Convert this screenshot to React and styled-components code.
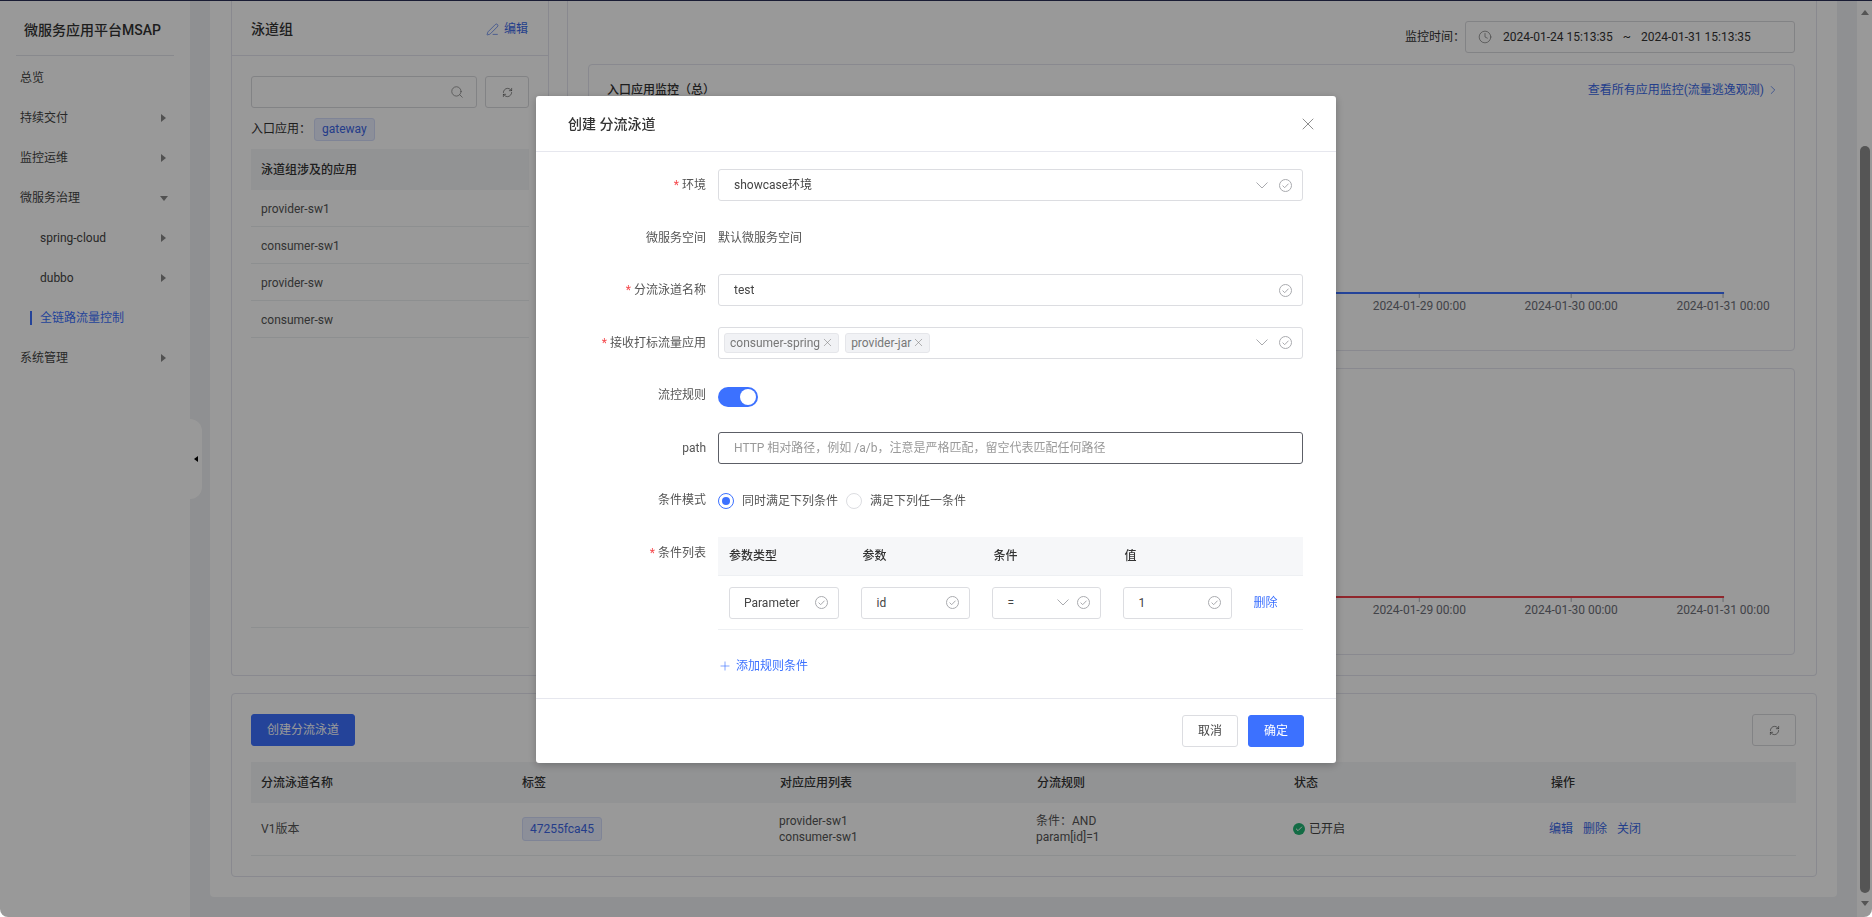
import styled, { createGlobalStyle } from 'styled-components';
import { Check as CheckMark, Clock, Plus, RefreshCw, Search, X, ChevronRight, PenLine } from 'lucide-react';

const GlobalStyle = createGlobalStyle`
  html, body {
    margin: 0;
    height: 100%;
    overflow: hidden;
    background: #fff;
  }
  * {
    box-sizing: border-box;
  }
  body {
    font-family: Roboto, "Noto Sans CJK SC", sans-serif;
    font-size: 12px;
    line-height: 16px;
    color: #333;
  }
`;

const Page = styled.div`
  height: 917px;
  display: flex;
  flex-direction: column;
  overflow: hidden;
  border-radius: 0 0 8px 8px;
`;

const TopEdge = styled.div`
  height: 1px;
  flex: none;
  background: #2a3058;
`;

const Body = styled.div`
  flex: 1;
  min-height: 0;
  display: flex;
`;

const Sidebar = styled.aside`
  width: 190px;
  flex: none;
  position: relative;
  background: #fff;
`;

const Brand = styled.div`
  height: 55px;
  margin: 0 16px 2px;
  padding: 3px 0 0 8px;
  display: flex;
  align-items: center;
  font-size: 14px;
  font-weight: 500;
  color: #333;
  border-bottom: 1px solid #e3e4ec;
`;

const MenuItem = styled.div`
  height: 40px;
  display: flex;
  align-items: center;
  justify-content: space-between;
  padding: 0 24px 0 ${p => (p.$sub ? 40 : 20)}px;
  color: ${p => (p.$active ? '#3c71ff' : '#444')};
  position: relative;

  ${p => p.$active && `
    &::before {
      content: '';
      position: absolute;
      left: 30px;
      top: 13px;
      width: 2px;
      height: 14px;
      background: #3c71ff;
    }
  `}
`;

const CaretRight = styled.i`
  width: 0;
  height: 0;
  border-left: 5px solid #888;
  border-top: 4px solid transparent;
  border-bottom: 4px solid transparent;
`;

const CaretDown = styled.i`
  width: 0;
  height: 0;
  margin-right: -2px;
  border-top: 5px solid #888;
  border-left: 4px solid transparent;
  border-right: 4px solid transparent;
`;

const CollapseHandle = styled.div`
  position: absolute;
  left: 100%;
  top: 418px;
  width: 12px;
  height: 80px;
  display: flex;
  align-items: center;
  justify-content: flex-end;
  padding-right: 4px;
  background: #fff;
  border-radius: 0 12px 12px 0;

  &::after {
    content: '';
    border-right: 4px solid #000;
    border-top: 3.5px solid transparent;
    border-bottom: 3.5px solid transparent;
  }
`;

const Main = styled.main`
  flex: 1;
  min-width: 0;
  padding: 0 20px 20px;
  background: #eef0f3;
`;

const Panel = styled.section`
  height: 100%;
  padding: 0 20px 20px 21px;
  background: #fff;
  border-radius: 0 0 4px 4px;
  display: flex;
  flex-direction: column;
  gap: 17px;
`;

const TopRow = styled.div`
  flex: 1;
  min-height: 0;
  display: flex;
  gap: 18px;
`;

const Card = styled.div`
  border: 1px solid #e4e5ee;
  border-top: none;
  border-radius: 0 0 4px 4px;
`;

const GroupCard = styled(Card)`
  width: 318px;
  flex: none;
  display: flex;
  flex-direction: column;
`;

const GroupHead = styled.div`
  height: 55px;
  flex: none;
  padding: 2px 20px 0 19px;
  display: flex;
  align-items: center;
  justify-content: space-between;
  border-bottom: 1px solid #e4e5ee;
`;

const GroupTitle = styled.div`
  font-size: 14px;
  font-weight: 500;
`;

const TextLink = styled.a`
  display: inline-flex;
  align-items: center;
  gap: ${p => p.$gap || 0}px;
  color: ${p => (p.$bright ? '#3c71ff' : '#3a68e8')};
  cursor: pointer;
`;

const GroupBody = styled.div`
  flex: 1;
  min-height: 0;
  padding: 20px 19px 47px 19px;
  display: flex;
  flex-direction: column;
`;

const SearchRow = styled.div`
  display: flex;
  gap: 8px;
`;

const SearchBox = styled.div`
  flex: 1;
  height: 32px;
  padding-right: 12px;
  display: flex;
  align-items: center;
  justify-content: flex-end;
  border: 1px solid #d9dade;
  border-radius: 3px;
  color: #777;
`;

const IconButton = styled.button`
  width: 44px;
  height: 32px;
  padding: 0;
  display: flex;
  align-items: center;
  justify-content: center;
  background: #fff;
  border: 1px solid #d9dade;
  border-radius: 3px;
  color: #444;
`;

const EntryRow = styled.div`
  height: 41px;
  flex: none;
  display: flex;
  align-items: center;
  gap: 3px;
  padding-top: 1px;
`;

const BlueTag = styled.span`
  height: ${p => p.$height || 24}px;
  padding: 0 7px;
  display: inline-flex;
  align-items: center;
  color: #3c66e6;
  background: #e9eeff;
  border: 1px solid #d4ddfb;
  border-radius: 3px;
`;

const GroupHeadCell = styled.div`
  height: 41px;
  flex: none;
  padding: 0 10px;
  display: flex;
  align-items: center;
  font-weight: 500;
  background: #f4f5f7;
`;

const GroupRow = styled.div`
  height: 37px;
  flex: none;
  padding: 1px 10px 0;
  display: flex;
  align-items: center;
  color: #555;
  border-bottom: 1px solid #eceef1;
`;

const GroupFill = styled.div`
  flex: 1;
  border-bottom: 1px solid #eceef1;
`;

const MonitorCard = styled(Card)`
  flex: 1;
  min-width: 0;
  padding: 20px 21px 20px 20px;
  display: flex;
  flex-direction: column;
  gap: 11px;
`;

const TimeRow = styled.div`
  height: 32px;
  flex: none;
  display: flex;
  align-items: center;
  justify-content: flex-end;
`;

const TimeBox = styled.div`
  width: 330px;
  height: 32px;
  padding: 0 12px;
  display: flex;
  align-items: center;
  gap: 10px;
  white-space: nowrap;
  border: 1px solid #d9dade;
  border-radius: 3px;
  color: #333;
`;

const ClockWrap = styled.span`
  display: flex;
  color: #777;
  margin-right: 1px;
`;

const ChartStack = styled.div`
  flex: 1;
  min-height: 0;
  display: flex;
  flex-direction: column;
  gap: 17px;
`;

const ChartCard = styled.div`
  height: 287px;
  flex: none;
  border: 1px solid #e4e5ee;
  border-radius: 4px;
`;

const ChartHead = styled.div`
  height: 48px;
  padding: 1px 14px 0 18px;
  display: flex;
  align-items: center;
  justify-content: space-between;
`;

const ChartTitle = styled.div`
  font-weight: 500;
`;

const ChartSvg = styled.svg`
  display: block;
  width: 100%;
  height: 237px;
`;

const AxisLabel = styled.text`
  font-size: 12px;
  fill: #6e7079;
  text-anchor: middle;
`;

const ListCard = styled.div`
  height: 184px;
  flex: none;
  padding: 20px 20px 20px 19px;
  border: 1px solid #e4e5ee;
  border-radius: 4px;
`;

const ListTools = styled.div`
  display: flex;
  justify-content: space-between;
  margin-bottom: 16px;
`;

const PrimaryButton = styled.button`
  height: 32px;
  padding: 0 15px;
  font: inherit;
  color: #fff;
  background: #3c71ff;
  border: 1px solid #3c71ff;
  border-radius: 3px;
`;

const GhostButton = styled(PrimaryButton)`
  color: #444;
  background: #fff;
  border-color: #dcdde1;
`;

const ListGrid = styled.div`
  display: grid;
  grid-template-columns: 261px 258px 257px 257px 257px 1fr;
`;

const ListHeadCell = styled.div`
  height: 41px;
  padding: 0 10px;
  display: flex;
  align-items: center;
  font-weight: 500;
  background: #f4f5f7;
`;

const ListCell = styled.div`
  height: 53px;
  padding: 0 10px;
  display: flex;
  align-items: center;
  color: #555;
  border-bottom: 1px solid #eceef1;
`;

const Lines = styled.div`
  display: flex;
  flex-direction: column;
  margin-left: -1px;
`;

const Status = styled.span`
  display: inline-flex;
  align-items: center;
  gap: 4px;
  margin-left: -1px;
  color: #444;
`;

const GreenDot = styled.span`
  width: 12px;
  height: 12px;
  display: flex;
  align-items: center;
  justify-content: center;
  color: #fff;
  background: #21b573;
  border-radius: 50%;
`;

const Actions = styled.div`
  display: flex;
  gap: 10px;
  margin-left: -2px;
`;

const ScrollTrack = styled.div`
  width: 15px;
  flex: none;
  padding: 9px 3px;
  display: flex;
  flex-direction: column;
  align-items: center;
  background: #fff;
`;

const ScrollThumb = styled.div`
  width: 10px;
  height: 747px;
  margin: 131px 0 8px;
  background: #8e8e8e;
  border-radius: 5px;
`;

const ArrowUp = styled.i`
  border-bottom: 5px solid #8e8e8e;
  border-left: 4.5px solid transparent;
  border-right: 4.5px solid transparent;
`;

const ArrowDown = styled.i`
  border-top: 5px solid #8e8e8e;
  border-left: 4.5px solid transparent;
  border-right: 4.5px solid transparent;
`;

const Overlay = styled.div`
  position: fixed;
  inset: 0;
  padding-top: 96px;
  display: flex;
  justify-content: center;
  align-items: flex-start;
  background: rgba(0, 0, 0, 0.4);
  border-radius: 0 0 8px 8px;
`;

const Modal = styled.div`
  width: 800px;
  height: 667px;
  display: flex;
  flex-direction: column;
  background: #fff;
  border-radius: 3px;
  box-shadow: 0 2px 8px rgba(0, 0, 0, 0.25);
`;

const ModalHead = styled.div`
  height: 56px;
  flex: none;
  padding: 0 18px 0 32px;
  display: flex;
  align-items: center;
  justify-content: space-between;
  font-size: 14px;
  font-weight: 500;
  border-bottom: 1px solid #e6e7ee;
  color: #777;

  span {
    color: #333;
  }
`;

const ModalBody = styled.div`
  flex: 1;
  min-height: 0;
  padding-top: 17px;
  display: flex;
  flex-direction: column;
  gap: 20.5px;
`;

const FormRow = styled.div`
  display: flex;
  align-items: flex-start;
  gap: 12px;
  height: ${p => (p.$auto ? 'auto' : '32px')};
`;

const Label = styled.label`
  width: 170px;
  flex: none;
  line-height: 32px;
  text-align: right;
  color: #555;

  ${p => p.$required && `
    &::before {
      content: '*';
      margin-right: 3px;
      color: #f5474b;
    }
  `}
`;

const Control = styled.div`
  width: 585px;
  min-height: 32px;
  display: flex;
  align-items: center;
`;

const Field = styled.div`
  width: ${p => (p.$width ? `${p.$width}px` : '100%')};
  height: 32px;
  flex: none;
  padding: 0 ${p => p.$right || 10}px 0 ${p => p.$left || 15}px;
  display: flex;
  align-items: center;
  gap: ${p => p.$gap || 11}px;
  color: ${p => (p.$muted ? '#999' : '#444')};
  background: #fff;
  border: 1px solid ${p => (p.$focused ? '#5c5e66' : '#dcdde1')};
  border-radius: 3px;
`;

const FieldValue = styled.span`
  flex: 1;
  min-width: 0;
  white-space: nowrap;
`;

const FieldIcon = styled.span`
  display: flex;
`;

const PlainValue = styled.span`
  line-height: 32px;
  color: #555;
`;

const TagList = styled.div`
  flex: 1;
  display: flex;
  gap: 6px;
  margin-left: -10px;
`;

const GrayTag = styled.span`
  height: 20px;
  padding: 0 7px 0 5px;
  display: inline-flex;
  align-items: center;
  gap: 4px;
  color: #777;
  background: #f1f2f5;
  border: 1px solid #e5e6ea;
  border-radius: 3px;

  svg {
    margin: 0 -3px;
  }
`;

const Switch = styled.div`
  width: 40px;
  height: 20px;
  margin-top: 8px;
  padding: 2px;
  display: flex;
  justify-content: flex-end;
  background: #3c71ff;
  border-radius: 10px;

  &::after {
    content: '';
    width: 16px;
    height: 16px;
    background: #fff;
    border-radius: 50%;
  }
`;

const RadioGroup = styled.div`
  display: flex;
  align-items: center;
  gap: 8px;
  padding-top: 1px;
`;

const Radio = styled.span`
  width: 16px;
  height: 16px;
  display: flex;
  align-items: center;
  justify-content: center;
  border: 1px solid ${p => (p.$checked ? '#3c71ff' : '#dcdde1')};
  border-radius: 50%;

  ${p => p.$checked && `
    &::after {
      content: '';
      width: 8px;
      height: 8px;
      background: #3c71ff;
      border-radius: 50%;
    }
  `}
`;

const RadioText = styled.span`
  color: #555;
`;

const RuleTable = styled.div`
  width: 585px;
`;

const RuleGrid = styled.div`
  display: grid;
  grid-template-columns: 131.5px 131px 131px 131px 1fr;
  align-items: center;
  height: ${p => p.$height}px;
  padding: ${p => (p.$head ? 0 : 1)}px 0 0 11px;
  background: ${p => (p.$head ? '#f6f7f9' : '#fff')};
  border-bottom: 1px solid #eef0f3;
`;

const RuleHead = styled.div`
  font-weight: 500;
  color: #333;

  &:not(:first-child) {
    padding-left: 2px;
  }
`;

const AddRule = styled.div`
  margin: 20px 0 0;
  height: 32px;
  display: flex;
  align-items: center;
  gap: 4px;
  color: #3c71ff;
`;

const ModalFoot = styled.div`
  height: 65px;
  flex: none;
  padding: 16px 32px 0 0;
  display: flex;
  justify-content: flex-end;
  gap: 10px;
  border-top: 1px solid #e6e7ee;
`;

const FieldSvg = styled.svg`
  display: block;
  fill: none;
  stroke: #a9aaae;
  stroke-width: 1;
`;

function Chevron() {
  return (
    <FieldIcon>
      <FieldSvg width="12" height="7" viewBox="0 0 12 7">
        <polyline points="0.5,0.5 6,6 11.5,0.5" />
      </FieldSvg>
    </FieldIcon>
  );
}

function Check() {
  return (
    <FieldIcon>
      <FieldSvg width="13" height="13" viewBox="0 0 13 13">
        <circle cx="6.5" cy="6.5" r="6" />
        <polyline points="3.6,6.6 5.7,8.7 9.5,4.7" />
      </FieldSvg>
    </FieldIcon>
  );
}

// only the ticks the dialog leaves visible
const ticks = [
  { x: 831, label: '2024-01-29 00:00' },
  { x: 983, label: '2024-01-30 00:00' },
  { x: 1135, label: '2024-01-31 00:00' },
];

function Chart({ color }) {
  return (
    <ChartSvg viewBox="0 0 1206 237">
      <line x1="60" y1="180" x2="1136" y2="180" stroke={color} strokeWidth="2" />
      {ticks.map(t => (
        <g key={t.x}>
          <line x1={t.x} y1="181" x2={t.x} y2="185" stroke="#a9acb5" />
          <AxisLabel x={t.x} y="197">{t.label}</AxisLabel>
        </g>
      ))}
    </ChartSvg>
  );
}

const menu = [
  { label: '总览' },
  { label: '持续交付', caret: 'right' },
  { label: '监控运维', caret: 'right' },
  { label: '微服务治理', caret: 'down' },
  { label: 'spring-cloud', caret: 'right', sub: true },
  { label: 'dubbo', caret: 'right', sub: true },
  { label: '全链路流量控制', sub: true, active: true },
  { label: '系统管理', caret: 'right' },
];

const groupApps = ['provider-sw1', 'consumer-sw1', 'provider-sw', 'consumer-sw'];
const listHeads = ['分流泳道名称', '标签', '对应应用列表', '分流规则', '状态', '操作'];

export default function App() {
  return (
    <>
      <GlobalStyle />
      <Page>
        <TopEdge />
        <Body>
          <Sidebar>
            <Brand>微服务应用平台MSAP</Brand>
            {menu.map(item => (
              <MenuItem key={item.label} $sub={item.sub} $active={item.active}>
                {item.label}
                {item.caret === 'right' && <CaretRight />}
                {item.caret === 'down' && <CaretDown />}
              </MenuItem>
            ))}
            <CollapseHandle />
          </Sidebar>

          <Main>
            <Panel>
              <TopRow>
                <GroupCard>
                  <GroupHead>
                    <GroupTitle>泳道组</GroupTitle>
                    <TextLink $gap={5}><PenLine size={13} strokeWidth={1.2} />编辑</TextLink>
                  </GroupHead>
                  <GroupBody>
                    <SearchRow>
                      <SearchBox><Search size={14} strokeWidth={1.2} /></SearchBox>
                      <IconButton><RefreshCw size={11} strokeWidth={1.3} /></IconButton>
                    </SearchRow>
                    <EntryRow>
                      入口应用：
                      <BlueTag $height={23}>gateway</BlueTag>
                    </EntryRow>
                    <GroupHeadCell>泳道组涉及的应用</GroupHeadCell>
                    {groupApps.map(app => <GroupRow key={app}>{app}</GroupRow>)}
                    <GroupFill />
                  </GroupBody>
                </GroupCard>

                <MonitorCard>
                  <TimeRow>
                    监控时间：
                    <TimeBox>
                      <ClockWrap><Clock size={14} strokeWidth={1.2} /></ClockWrap>
                      <span>2024-01-24 15:13:35</span>
                      <span>~</span>
                      <span>2024-01-31 15:13:35</span>
                    </TimeBox>
                  </TimeRow>
                  <ChartStack>
                    <ChartCard>
                      <ChartHead>
                        <ChartTitle>入口应用监控（总）</ChartTitle>
                        <TextLink $gap={2}>查看所有应用监控(流量逃逸观测)<ChevronRight size={14} strokeWidth={1.2} /></TextLink>
                      </ChartHead>
                      <Chart color="#3c71ff" />
                    </ChartCard>
                    <ChartCard>
                      <ChartHead />
                      <Chart color="#f0404a" />
                    </ChartCard>
                  </ChartStack>
                </MonitorCard>
              </TopRow>

              <ListCard>
                <ListTools>
                  <PrimaryButton>创建分流泳道</PrimaryButton>
                  <IconButton><RefreshCw size={11} strokeWidth={1.3} /></IconButton>
                </ListTools>
                <ListGrid>
                  {listHeads.map(h => <ListHeadCell key={h}>{h}</ListHeadCell>)}
                  <ListCell>V1版本</ListCell>
                  <ListCell><BlueTag>47255fca45</BlueTag></ListCell>
                  <ListCell><Lines><span>provider-sw1</span><span>consumer-sw1</span></Lines></ListCell>
                  <ListCell><Lines><span>条件：AND</span><span>param[id]=1</span></Lines></ListCell>
                  <ListCell>
                    <Status>
                      <GreenDot><CheckMark size={8} strokeWidth={3} /></GreenDot>
                      已开启
                    </Status>
                  </ListCell>
                  <ListCell>
                    <Actions>
                      <TextLink>编辑</TextLink>
                      <TextLink>删除</TextLink>
                      <TextLink>关闭</TextLink>
                    </Actions>
                  </ListCell>
                </ListGrid>
              </ListCard>
            </Panel>
          </Main>

          <ScrollTrack>
            <ArrowUp />
            <ScrollThumb />
            <ArrowDown />
          </ScrollTrack>
        </Body>
      </Page>

      <Overlay>
        <Modal>
          <ModalHead>
            <span>创建 分流泳道</span>
            <X size={20} strokeWidth={1} />
          </ModalHead>
          <ModalBody>
            <FormRow>
              <Label $required>环境</Label>
              <Control>
                <Field>
                  <FieldValue>showcase环境</FieldValue>
                  <Chevron />
                  <Check />
                </Field>
              </Control>
            </FormRow>
            <FormRow>
              <Label>微服务空间</Label>
              <Control><PlainValue>默认微服务空间</PlainValue></Control>
            </FormRow>
            <FormRow>
              <Label $required>分流泳道名称</Label>
              <Control>
                <Field>
                  <FieldValue>test</FieldValue>
                  <Check />
                </Field>
              </Control>
            </FormRow>
            <FormRow>
              <Label $required>接收打标流量应用</Label>
              <Control>
                <Field>
                  <TagList>
                    <GrayTag>consumer-spring <X size={13} strokeWidth={1} /></GrayTag>
                    <GrayTag>provider-jar <X size={13} strokeWidth={1} /></GrayTag>
                  </TagList>
                  <Chevron />
                  <Check />
                </Field>
              </Control>
            </FormRow>
            <FormRow>
              <Label>流控规则</Label>
              <Switch />
            </FormRow>
            <FormRow>
              <Label>path</Label>
              <Control>
                <Field $muted $focused>
                  <FieldValue>HTTP 相对路径，例如 /a/b，注意是严格匹配，留空代表匹配任何路径</FieldValue>
                </Field>
              </Control>
            </FormRow>
            <FormRow>
              <Label>条件模式</Label>
              <Control>
                <RadioGroup>
                  <Radio $checked />
                  <RadioText>同时满足下列条件</RadioText>
                  <Radio />
                  <RadioText>满足下列任一条件</RadioText>
                </RadioGroup>
              </Control>
            </FormRow>
            <FormRow $auto>
              <Label $required>条件列表</Label>
              <RuleTable>
                <RuleGrid $head $height={39}>
                  <RuleHead>参数类型</RuleHead>
                  <RuleHead>参数</RuleHead>
                  <RuleHead>条件</RuleHead>
                  <RuleHead>值</RuleHead>
                </RuleGrid>
                <RuleGrid $height={54}>
                  <Field $width={110} $left={14} $gap={6}><FieldValue>Parameter</FieldValue><Check /></Field>
                  <Field $width={109}><FieldValue>id</FieldValue><Check /></Field>
                  <Field $width={109} $gap={8}><FieldValue>=</FieldValue><Chevron /><Check /></Field>
                  <Field $width={109}><FieldValue>1</FieldValue><Check /></Field>
                  <TextLink $bright>删除</TextLink>
                </RuleGrid>
                <AddRule><Plus size={14} strokeWidth={1.1} />添加规则条件</AddRule>
              </RuleTable>
            </FormRow>
          </ModalBody>
          <ModalFoot>
            <GhostButton>取消</GhostButton>
            <PrimaryButton>确定</PrimaryButton>
          </ModalFoot>
        </Modal>
      </Overlay>
    </>
  );
}
